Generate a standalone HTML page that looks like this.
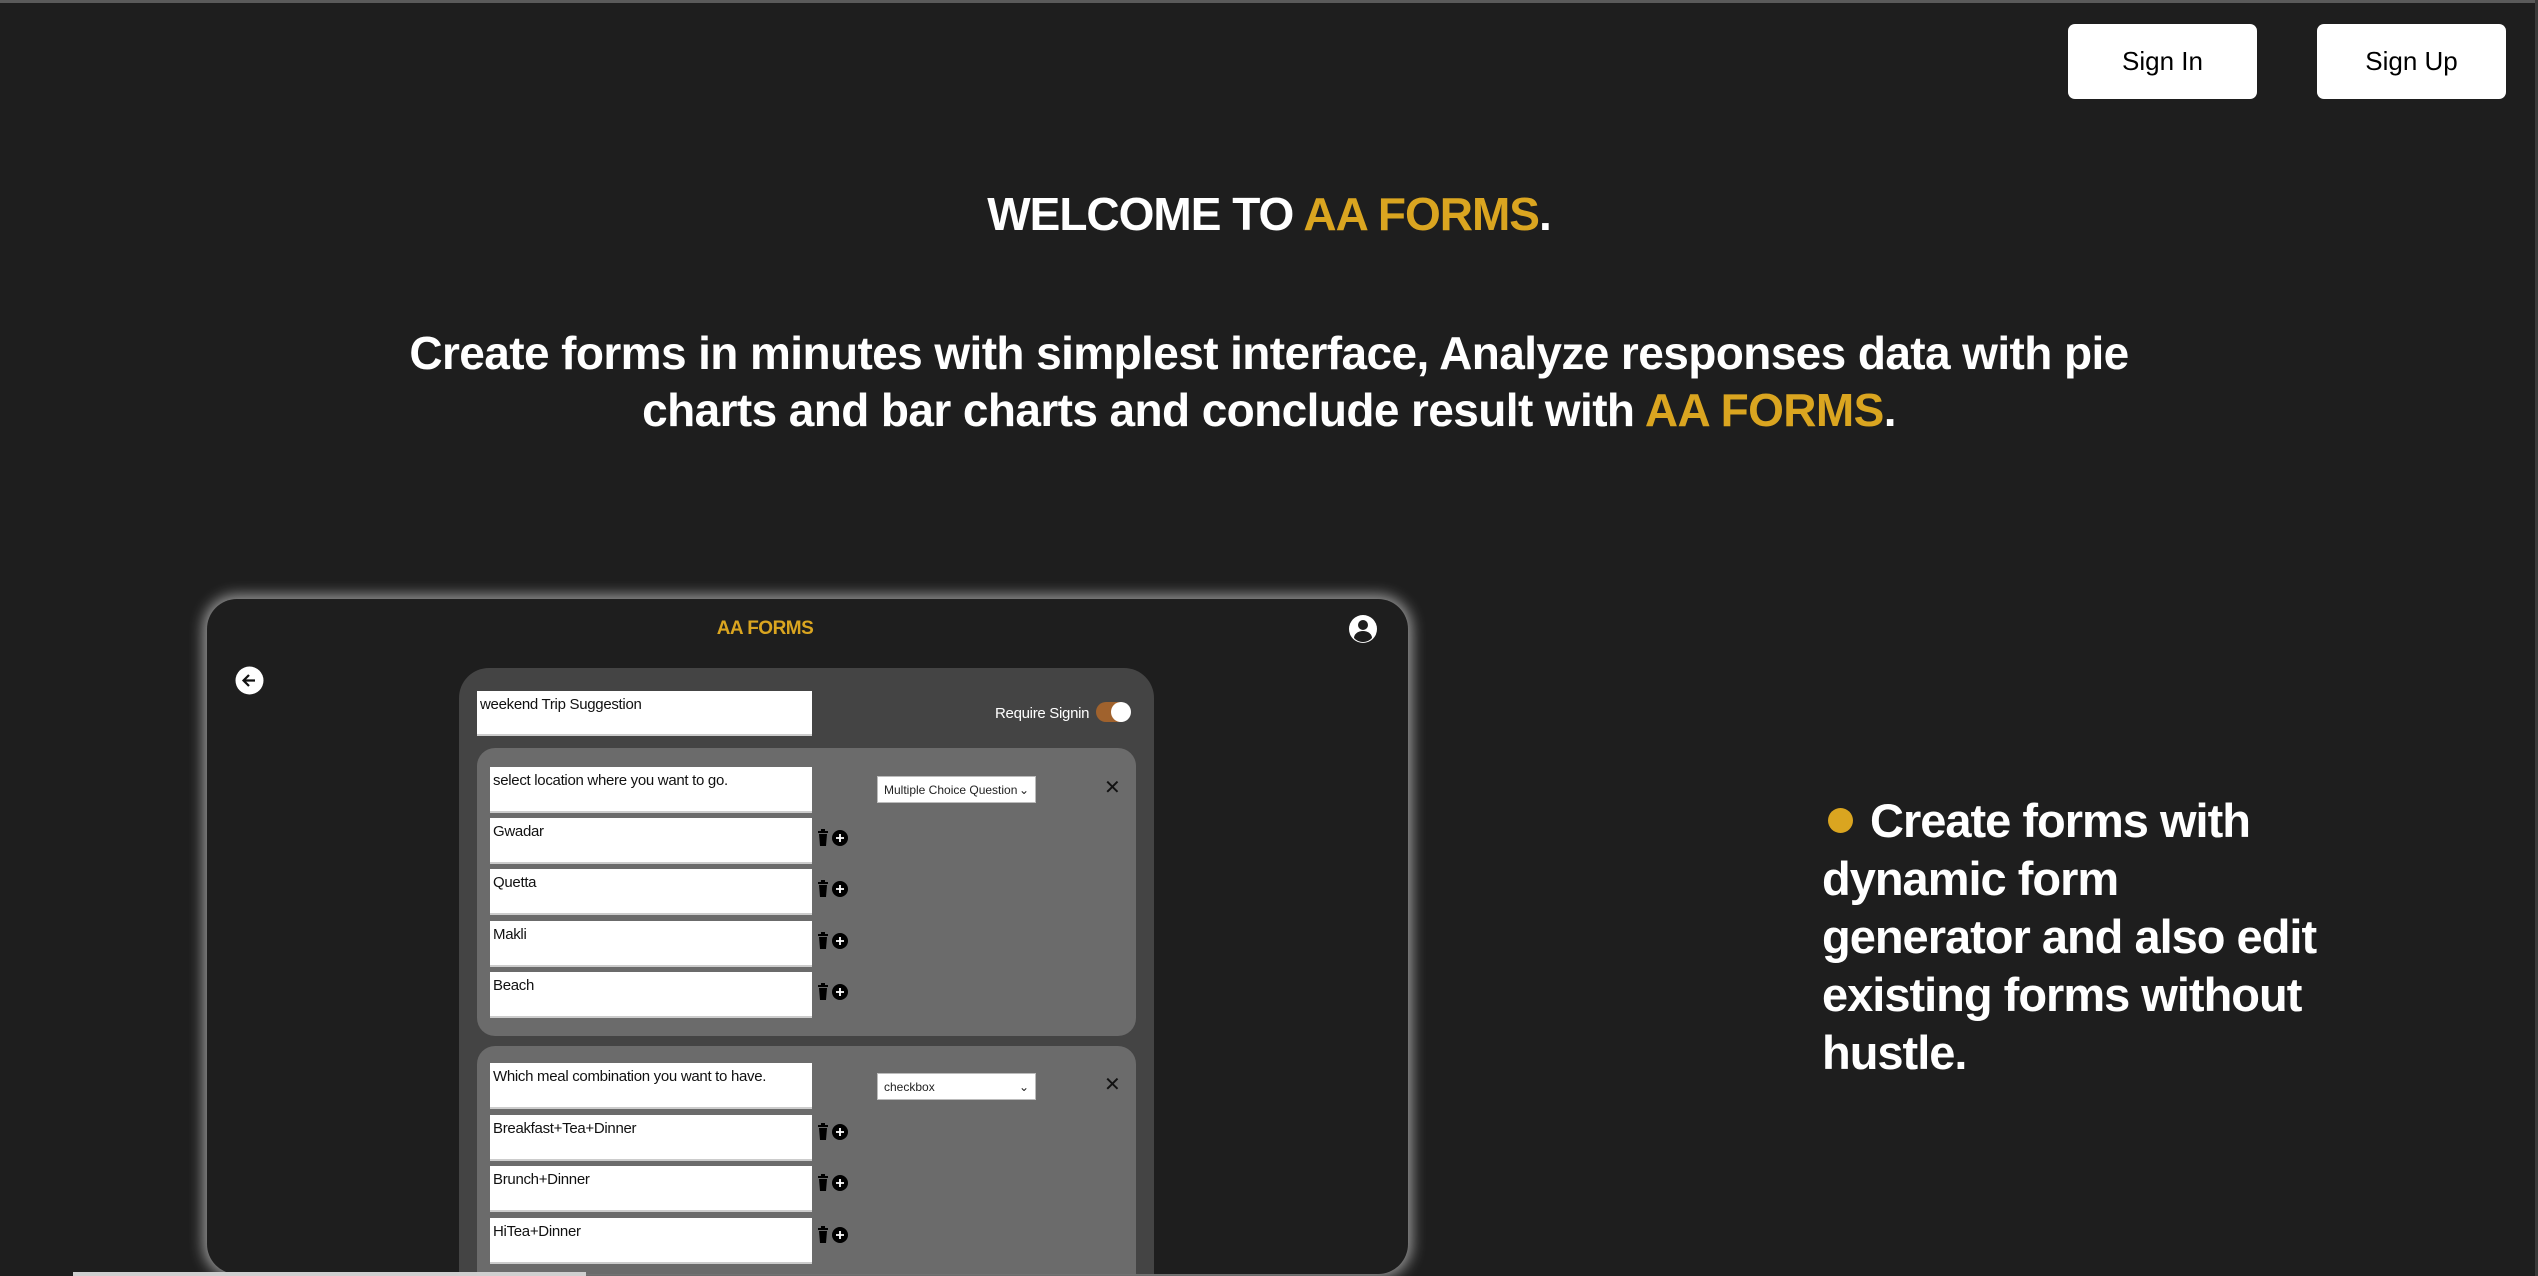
<!DOCTYPE html>
<html><head><meta charset="utf-8"><style>
*{margin:0;padding:0;box-sizing:border-box}
html{overflow:hidden;height:1276px}
body{width:2538px;height:1276px;background:#1e1e1e;overflow:hidden;position:relative;font-family:"Liberation Sans",Arial,sans-serif;color:#fff}
.a{position:absolute}
.btn{background:#fff;color:#000;border-radius:7px;width:189px;height:75px;top:24px;font-size:26px;display:flex;align-items:center;justify-content:center}
.g{color:#daa520}
h1{position:absolute;top:187px;left:0;width:2538px;text-align:center;font-size:46px;font-weight:bold;letter-spacing:-1px}
.p{position:absolute;top:325px;left:0;width:2538px;text-align:center;font-size:46px;font-weight:bold;line-height:57px;letter-spacing:-0.6px}
.card{left:207px;top:599px;width:1201px;height:675px;background:#1e1e1e;border-radius:30px;box-shadow:0 0 14px 4px rgba(255,255,255,.55);overflow:hidden}
.in{position:absolute;background:#fff;color:#111;font-size:15px;padding:5px 3px;border-bottom:2px solid #ccc;letter-spacing:-0.3px;width:322px;left:13px}
.q{position:absolute;background:#6b6b6b;border-radius:18px;left:18px;width:659px}
.sel{position:absolute;background:#fff;color:#222;font-size:12px;padding:0 6px;border:1px solid #bbb;display:flex;align-items:center;justify-content:space-between;white-space:nowrap}
.x{position:absolute;font-size:20px;color:#111}
</style></head><body>
<div class="a" style="left:0;top:0;width:2538px;height:3px;background:#5a5a5a"></div>
<div class="a btn" style="left:2068px">Sign In</div>
<div class="a btn" style="left:2317px">Sign Up</div>
<h1>WELCOME TO <span class="g">AA FORMS</span>.</h1>
<div class="p">Create forms in minutes with simplest interface, Analyze responses data with pie<br>charts and bar charts and conclude result with <span class="g">AA FORMS</span>.</div>

<div class="a card">
  <div class="a g" style="left:0;width:1116px;text-align:center;top:19px;font-size:19px;font-weight:bold;letter-spacing:-0.5px">AA FORMS</div>
  <svg class="a" style="left:1141px;top:15px" width="30" height="30" viewBox="0 0 30 30"><circle cx="15" cy="15" r="14" fill="#fff"/><circle cx="15" cy="11" r="5" fill="#1e1e1e"/><path d="M6 24a9 7 0 0 1 18 0a12 12 0 0 1-18 0z" fill="#1e1e1e"/></svg>
  <svg class="a" style="left:28px;top:67px" width="29" height="29" viewBox="0 0 29 29"><circle cx="14.5" cy="14.5" r="14" fill="#fff"/><path d="M20 14.5H9M14 9l-5.5 5.5L14 20" stroke="#111" stroke-width="2.2" fill="none"/></svg>
  <div class="a" style="left:252px;top:69px;width:695px;height:640px;background:#444;border-radius:30px 30px 0 0">
    <div class="in" style="left:18px;top:23px;width:335px;height:45px">weekend Trip Suggestion</div>
    <div class="a" style="left:536px;top:37px;font-size:15px;letter-spacing:-0.3px">Require Signin</div>
    <div class="a" style="left:637px;top:34px;width:34px;height:20px;border-radius:10px;background:#a0622d"></div>
    <div class="a" style="left:652px;top:34px;width:20px;height:20px;border-radius:10px;background:#fff"></div>
    <div class="q" style="top:80px;height:288px">
      <div class="in" style="top:19px;height:46px">select location where you want to go.</div>
      <div class="in" style="top:70px;height:46px">Gwadar</div>
      <div class="in" style="top:121px;height:46px">Quetta</div>
      <div class="in" style="top:173px;height:46px">Makli</div>
      <div class="in" style="top:224px;height:46px">Beach</div>
      <div class="sel" style="left:400px;top:28px;width:159px;height:27px">Multiple Choice Question <span>⌄</span></div>
      <div class="x" style="left:627px;top:27px">✕</div>
    </div>
    <div class="q" style="top:378px;height:300px">
      <div class="in" style="top:17px;height:46px">Which meal combination you want to have.</div>
      <div class="in" style="top:69px;height:46px">Breakfast+Tea+Dinner</div>
      <div class="in" style="top:120px;height:46px">Brunch+Dinner</div>
      <div class="in" style="top:172px;height:46px">HiTea+Dinner</div>
      <div class="sel" style="left:400px;top:27px;width:159px;height:27px">checkbox<span>⌄</span></div>
      <div class="x" style="left:627px;top:26px">✕</div>
    </div>
  </div>
</div>
<svg class="a" style="left:0;top:0" width="2538" height="1276">
  <defs>
    <g id="ti"><path d="M0 2h10v2H0zM3 0h4v2H3z"/><path d="M1 5h8l-1 12H2z"/><circle cx="22" cy="9" r="8"/><path d="M22 5v8M18 9h8" stroke="#fff" stroke-width="1.8"/></g>
  </defs>
  <g fill="#000">
    <use href="#ti" x="818" y="829"/>
    <use href="#ti" x="818" y="880"/>
    <use href="#ti" x="818" y="932"/>
    <use href="#ti" x="818" y="983"/>
    <use href="#ti" x="818" y="1123"/>
    <use href="#ti" x="818" y="1174"/>
    <use href="#ti" x="818" y="1226"/>
  </g>
  <rect x="73" y="1272" width="513" height="4" fill="#cfcfcf"/>
</svg>

<div class="a" style="left:1828px;top:808px;width:25px;height:25px;border-radius:50%;background:#daa520"></div>
<div class="a" style="left:1822px;top:792px;font-size:47px;font-weight:bold;line-height:58px;letter-spacing:-1px;white-space:nowrap"><span style="display:inline-block;width:48px"></span>Create forms with<br>dynamic form<br>generator and also edit<br>existing forms without<br>hustle.</div>
<div class="a" style="right:0;top:0;width:3px;height:1276px;background:#3a3a3a"></div>
</body></html>
